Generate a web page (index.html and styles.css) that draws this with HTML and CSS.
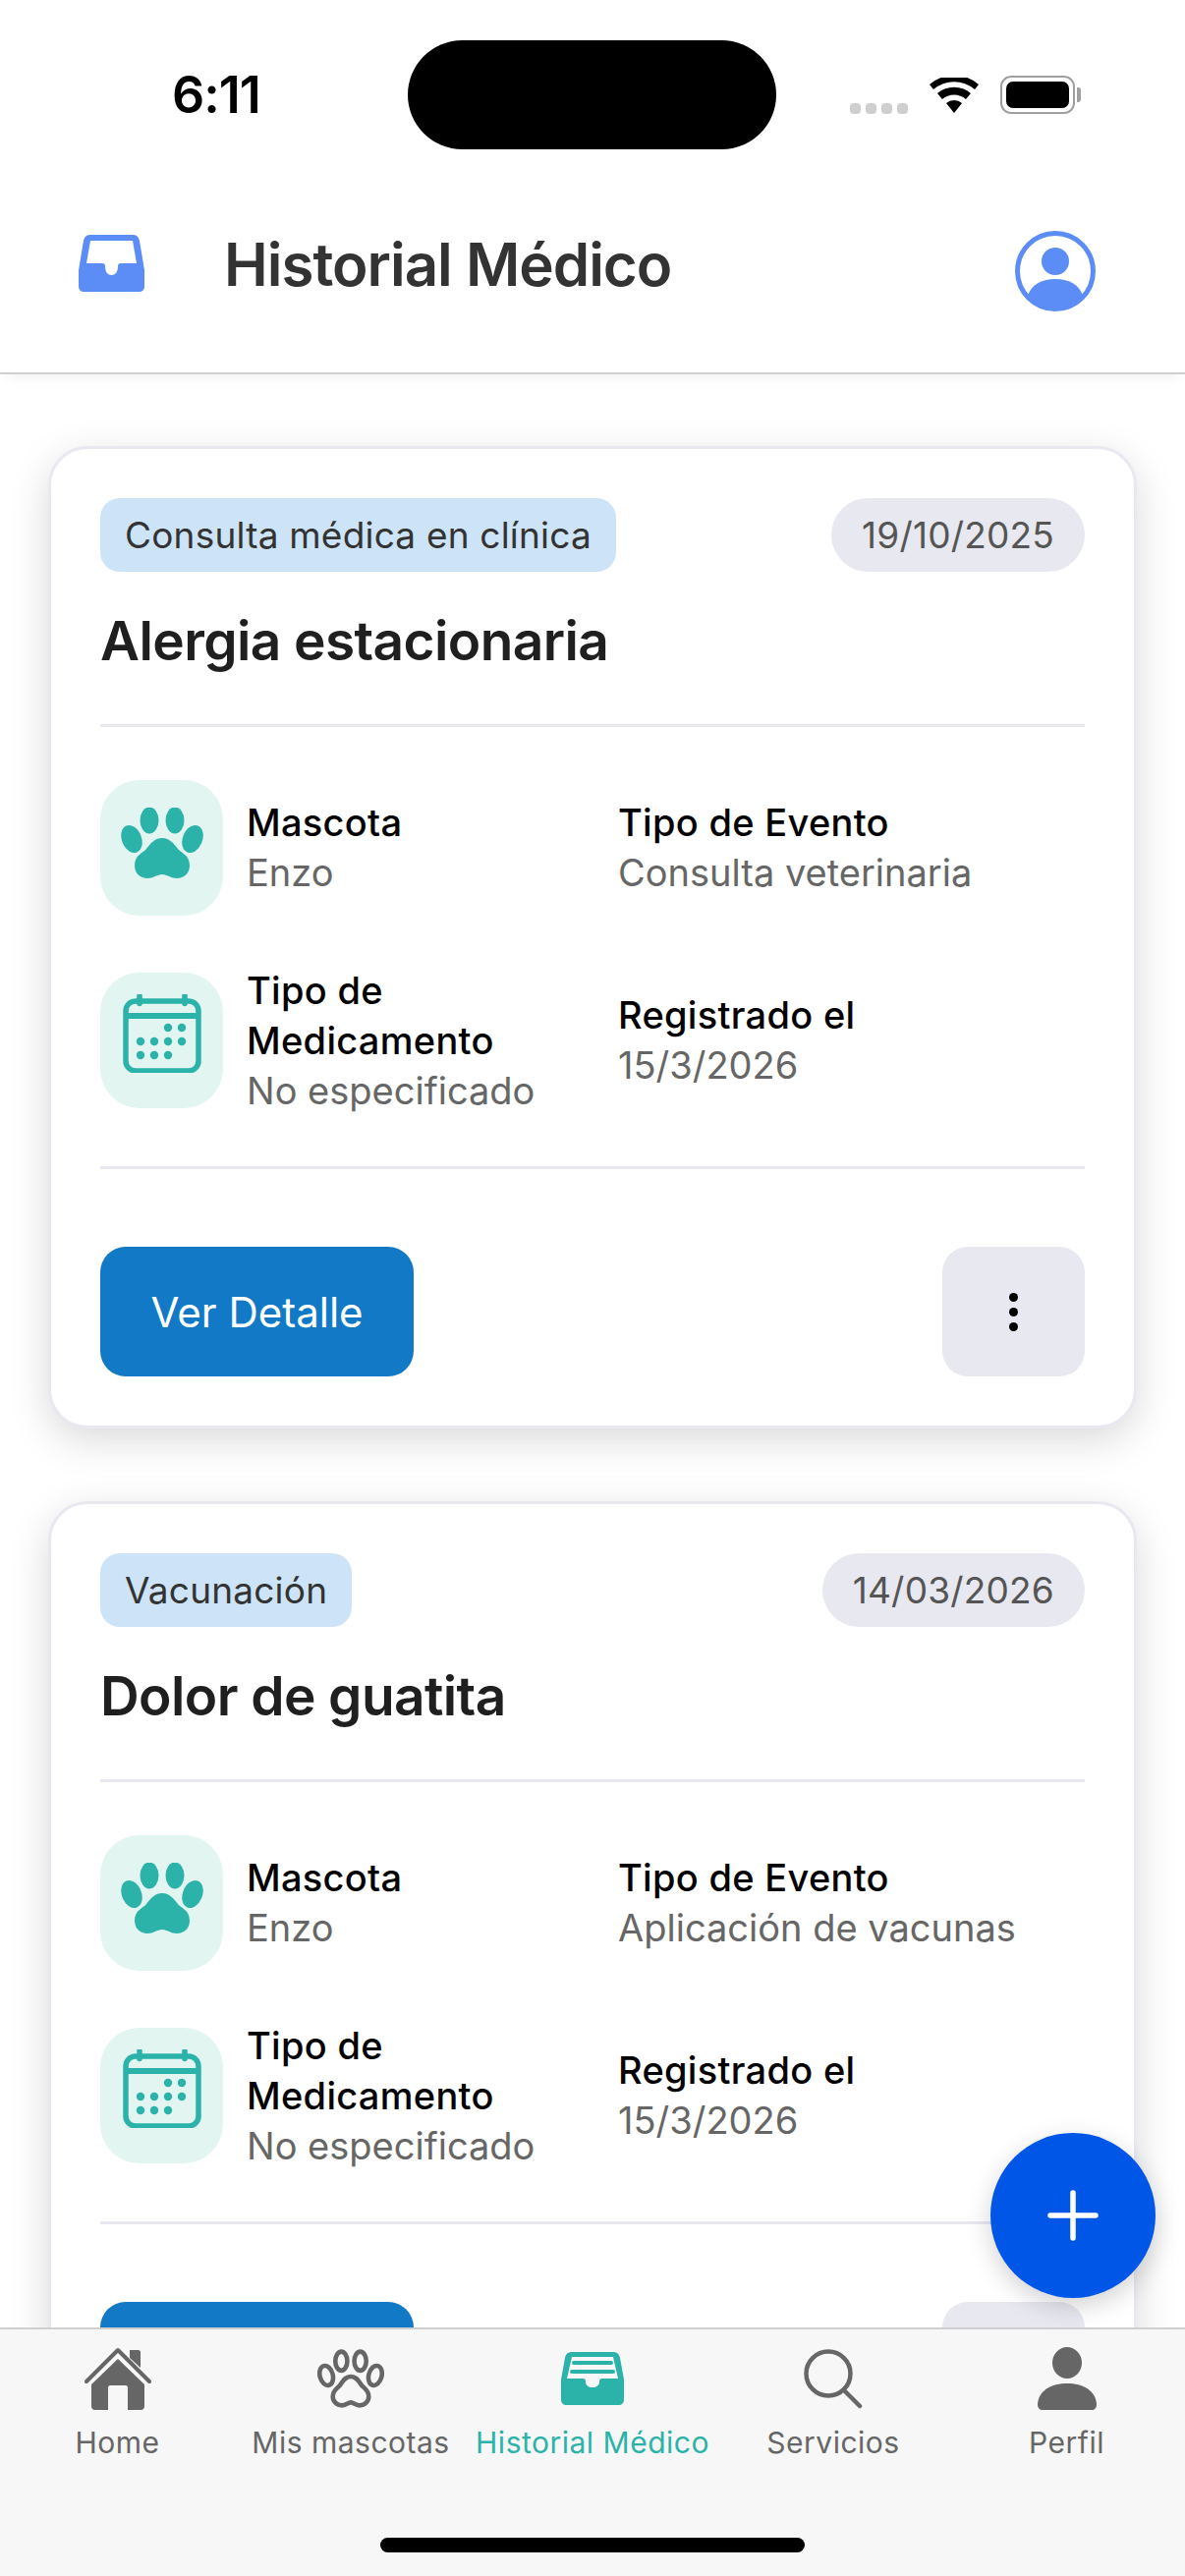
FILE: index.html
```html
<!DOCTYPE html>
<html lang="es">

<head>
    <meta charset="utf-8">
    <meta name="viewport" content="width=device-width, initial-scale=1.0">
    <title>Historial Médico</title>
    <link rel="stylesheet" href="styles.css">
</head>

<body>
    <svg class="defs" width="0" height="0">
        <symbol id="paw" viewBox="0 0 84 72">
            <ellipse cx="29" cy="13" rx="9.5" ry="13.5" />
            <ellipse cx="55" cy="13" rx="9.5" ry="13.5" />
            <ellipse cx="11" cy="32" rx="10" ry="14.5" transform="rotate(-22 11 32)" />
            <ellipse cx="73" cy="32" rx="10" ry="14.5" transform="rotate(22 73 32)" />
            <path d="M42 31c8 0 12 6 16 11 3 4 12 6 12 17 0 8-6 13-13 13-6 0-10-4-15-4s-9 4-15 4c-7 0-13-5-13-13 0-11 9-13 12-17 4-5 8-11 16-11z" />
        </symbol>
        <symbol id="calendario" viewBox="0 0 80 80">
            <rect x="3" y="7" width="74" height="71" rx="10" fill="none" stroke="currentColor" stroke-width="5.5" />
            <path d="M3 22h74" stroke="currentColor" stroke-width="6" />
            <path d="M17 1.500v8M63 1.500v8" stroke="currentColor" stroke-width="5.5" stroke-linecap="round" />
            <g fill="currentColor">
                <circle cx="46" cy="34" r="4.2" />
                <circle cx="60" cy="34" r="4.2" />
                <circle cx="18" cy="48" r="4.2" />
                <circle cx="32" cy="48" r="4.2" />
                <circle cx="46" cy="48" r="4.2" />
                <circle cx="60" cy="48" r="4.2" />
                <circle cx="18" cy="62" r="4.2" />
                <circle cx="32" cy="62" r="4.2" />
                <circle cx="46" cy="62" r="4.2" />
            </g>
        </symbol>
    </svg>

    <main class="telefono">
        <div class="status">
            <span class="hora">6:11</span>
            <div class="isla"></div>
            <div class="status-iconos">
                <div class="senal"><i></i><i></i><i></i><i></i></div>
                <svg class="wifi" viewBox="0 0 50 36">
                    <path d="M25 36 17 26a12 12 0 0 1 16 0zM13 22 8 16a26 26 0 0 1 34 0l-5 6a18 18 0 0 0-24 0zM4 12 0 7a38 38 0 0 1 50 0l-4 5a32 32 0 0 0-42 0z" />
                </svg>
                <div class="bateria"><div class="bateria-nivel"></div></div>
            </div>
        </div>

        <header class="cabecera">
            <svg class="cabecera-icono" viewBox="0 0 67 58">
                <path fill-rule="evenodd" d="M12 0h43c4 0 6 2 7 6l5 30v16c0 4-2 6-6 6H6c-4 0-6-2-6-6V36L5 6c1-4 3-6 7-6zm0 6L8 29h16c2 0 3 1 3 3 0 5 2 9 6.500 9S40 37 40 32c0-2 1-3 3-3h16L55 6z" />
            </svg>
            <h1>Historial Médico</h1>
            <svg class="cabecera-perfil" viewBox="0 0 82 82">
                <circle cx="41" cy="41" r="38.500" fill="none" stroke="currentColor" stroke-width="5" />
                <circle cx="41" cy="31" r="14" />
                <path d="M13 66c4-12 15-17 28-17s24 5 28 17a38 38 0 0 1-56 0z" />
            </svg>
        </header>

        <section class="lista">
            <article class="tarjeta">
                <div class="tarjeta-top">
                    <span class="tag">Consulta médica en clínica</span>
                    <span class="fecha">19/10/2025</span>
                </div>
                <h2>Alergia estacionaria</h2>
                <div class="datos">
                    <div class="dato">
                        <div class="dato-icono"><svg class="ic-paw"><use href="#paw" /></svg></div>
                        <p><b>Mascota</b>Enzo</p>
                    </div>
                    <div class="dato">
                        <p><b>Tipo de Evento</b>Consulta veterinaria</p>
                    </div>
                    <div class="dato">
                        <div class="dato-icono"><svg class="ic-cal"><use href="#calendario" /></svg></div>
                        <p><b>Tipo de Medicamento</b>No especificado</p>
                    </div>
                    <div class="dato">
                        <p><b>Registrado el</b>15/3/2026</p>
                    </div>
                </div>
                <div class="acciones">
                    <button class="ver">Ver Detalle</button>
                    <button class="mas" aria-label="Más"><i></i><i></i><i></i></button>
                </div>
            </article>

            <article class="tarjeta">
                <div class="tarjeta-top">
                    <span class="tag">Vacunación</span>
                    <span class="fecha">14/03/2026</span>
                </div>
                <h2>Dolor de guatita</h2>
                <div class="datos">
                    <div class="dato">
                        <div class="dato-icono"><svg class="ic-paw"><use href="#paw" /></svg></div>
                        <p><b>Mascota</b>Enzo</p>
                    </div>
                    <div class="dato">
                        <p><b>Tipo de Evento</b>Aplicación de vacunas</p>
                    </div>
                    <div class="dato">
                        <div class="dato-icono"><svg class="ic-cal"><use href="#calendario" /></svg></div>
                        <p><b>Tipo de Medicamento</b>No especificado</p>
                    </div>
                    <div class="dato">
                        <p><b>Registrado el</b>15/3/2026</p>
                    </div>
                </div>
                <div class="acciones">
                    <button class="ver">Ver Detalle</button>
                    <button class="mas" aria-label="Más"><i></i><i></i><i></i></button>
                </div>
            </article>
        </section>

        <button class="fab" aria-label="Agregar">
            <svg viewBox="0 0 52 52"><path d="M26 3v46M3 26h46" /></svg>
        </button>

        <nav class="tabs">
            <a class="tab">
                <svg viewBox="0 0 68 64">
                    <path d="M46 3h9c1 0 2 1 2 2v16l-11-10z" />
                    <path d="M34 12 7 38v22c0 2 1 4 4 4h13V41c0-1 1-2 2-2h16c1 0 2 1 2 2v23h13c3 0 4-2 4-4V38z" />
                    <path d="M2 35 34 3l32 32" fill="none" stroke="currentColor" stroke-width="4" stroke-linecap="round" stroke-linejoin="round" />
                </svg>
                <span>Home</span>
            </a>
            <a class="tab">
                <svg viewBox="0 0 67 58" class="pata-linea">
                    <ellipse cx="24" cy="11.500" rx="6" ry="9.500" />
                    <ellipse cx="43" cy="11.500" rx="6" ry="9.500" />
                    <ellipse cx="9" cy="26" rx="6.500" ry="10" transform="rotate(-15 9 26)" />
                    <ellipse cx="58" cy="26" rx="6.500" ry="10" transform="rotate(15 58 26)" />
                    <path d="M33.500 27c6 0 8 5 11 9 3 3 7 5 7 11 0 5-4 9-9 9-4 0-6-3-9-3s-5 3-9 3c-5 0-9-4-9-9 0-6 4-8 7-11 3-4 5-9 11-9z" />
                </svg>
                <span>Mis mascotas</span>
            </a>
            <a class="tab activo">
                <svg viewBox="0 0 64 54">
                    <path fill-rule="evenodd" d="M11 0h42c4 0 6 2 7 6l4 22v20c0 4-2 6-6 6H6c-4 0-6-2-6-6V28L4 6c1-4 3-6 7-6zm0 5L6 27h16c2 0 3 1 3 3 0 4 3 6 7 6s7-2 7-6c0-2 1-3 3-3h16L53 5z" />
                    <path d="M13 11h38M11 20h42" stroke="currentColor" stroke-width="4" stroke-linecap="round" />
                </svg>
                <span>Historial Médico</span>
            </a>
            <a class="tab">
                <svg viewBox="0 0 60 60" class="lupa">
                    <circle cx="25" cy="25" r="22.500" />
                    <path d="M41 42 57 58" stroke-linecap="round" />
                </svg>
                <span>Servicios</span>
            </a>
            <a class="tab">
                <svg viewBox="0 0 60 64">
                    <ellipse cx="30" cy="16" rx="15" ry="16" />
                    <path d="M0 58c1-14 14-21 30-21s29 7 30 21c0 4-2 6-5 6H5c-3 0-5-2-5-6z" />
                </svg>
                <span>Perfil</span>
            </a>
        </nav>
        <div class="home-bar"></div>
    </main>
</body></html>
```

FILE: styles.css
```css
* {
    box-sizing: border-box;
}

html,
body {
    margin: 0;
    padding: 0;
}

body {
    font-family: Inter, "Noto Sans", sans-serif;
    background-color: white;
}

.defs {
    position: absolute;
}

.telefono {
    position: relative;
    width: 1206px;
    height: 2622px;
    overflow: hidden;
    display: flex;
    flex-direction: column;
}

/* status bar */
.status {
    display: flex;
    align-items: center;
    height: 111px;
    margin-top: 41px;
    padding-left: 175px;
    flex-shrink: 0;
}

.hora {
    width: 240px;
    font-size: 52px;
    font-weight: 600;
    color: black;
    letter-spacing: -1px;
}

.isla {
    width: 375px;
    height: 111px;
    border-radius: 56px;
    background-color: black;
}

.status-iconos {
    display: flex;
    align-items: center;
    margin-left: 75px;
}

.senal {
    display: flex;
    gap: 5px;
    margin-top: 28px;
    margin-right: 22px;
}

.senal i {
    width: 11px;
    height: 11px;
    border-radius: 4px;
    background-color: #cfcfcf;
}

.wifi {
    width: 50px;
    height: 36px;
    margin-right: 22px;
}

.bateria {
    position: relative;
    width: 76px;
    height: 39px;
    padding: 4px;
    border: 2px solid #a0a0a0;
    border-radius: 11px;
}

.bateria::after {
    content: "";
    position: absolute;
    right: -8px;
    top: 10px;
    width: 4px;
    height: 15px;
    border-radius: 0 3px 3px 0;
    background-color: #a0a0a0;
}

.bateria-nivel {
    width: 100%;
    height: 100%;
    border-radius: 7px;
    background-color: black;
}

/* header */
.cabecera {
    display: flex;
    align-items: center;
    height: 229px;
    padding: 0 91px 0 80px;
    background-color: white;
    border-bottom: 2px solid #cfcfcf;
    flex-shrink: 0;
    position: relative;
    z-index: 2;
    box-shadow: 0 10px 12px -6px rgba(0, 0, 0, 0.05);
}

.cabecera h1 {
    flex: 1;
    margin: 6px 0 0 81px;
    font-size: 60px;
    font-weight: 600;
    letter-spacing: -1px;
    color: #333333;
}

.cabecera-icono {
    width: 67px;
    height: 58px;
    margin-top: 4px;
    fill: #5c8df6;
}

.cabecera-perfil {
    width: 82px;
    height: 82px;
    margin-top: 20px;
    color: #5c8df6;
    fill: #5c8df6;
}

/* cards */
.lista {
    flex: 1;
    min-height: 0;
    overflow: hidden;
    padding: 73px 49px 0 49px;
    display: flex;
    flex-direction: column;
    gap: 74px;
}

.tarjeta {
    flex-shrink: 0;
    padding: 50px;
    border: 3px solid #e8e8f0;
    border-radius: 40px;
    background-color: white;
    box-shadow: 0 12px 40px rgba(0, 0, 0, 0.15);
}

.tarjeta-top {
    display: flex;
    justify-content: space-between;
}

.tag,
.fecha {
    display: block;
    height: 75px;
    line-height: 75px;
    font-size: 37px;
    letter-spacing: 0.2px;
}

.tag {
    padding: 0 25px;
    border-radius: 20px;
    background-color: #cde4f8;
    color: #333333;
}

.fecha {
    padding: 0 31px;
    border-radius: 38px;
    background-color: #e8e8f0;
    color: #555555;
}

.tarjeta h2 {
    height: 158px;
    margin: 0;
    padding-top: 37px;
    border-bottom: 3px solid #e8e8f0;
    font-size: 55px;
    font-weight: 600;
    letter-spacing: -0.6px;
    color: #1f1f1f;
}

.datos {
    display: grid;
    grid-template-columns: 527px 1fr;
    row-gap: 49px;
    padding: 54px 0 51px;
    border-bottom: 3px solid #e8e8f0;
}

.dato {
    display: flex;
    align-items: center;
    gap: 24px;
}

.dato p {
    margin: 0;
    width: 310px;
    font-size: 38px;
    line-height: 51px;
    color: #666666;
}

.dato:nth-child(even) p {
    width: auto;
}

.dato:nth-child(3) p {
    padding-top: 2px;
}

.dato b {
    display: block;
    font-weight: 500;
    letter-spacing: 0.3px;
    color: black;
}

.dato-icono {
    display: flex;
    align-items: center;
    justify-content: center;
    width: 125px;
    height: 138px;
    flex-shrink: 0;
    border-radius: 40px;
    background-color: #e2f5f1;
}

.ic-paw {
    width: 84px;
    height: 72px;
    margin-bottom: 10px;
    fill: #2bb3aa;
}

.ic-cal {
    width: 80px;
    height: 80px;
    margin-bottom: 14px;
    color: #2bb3aa;
}

.acciones {
    display: flex;
    justify-content: space-between;
    padding-top: 79px;
}

button {
    border: none;
    font-family: inherit;
}

.ver {
    width: 319px;
    height: 132px;
    border-radius: 26px;
    background-color: #1279c6;
    color: white;
    font-size: 42px;
}

.mas {
    display: flex;
    flex-direction: column;
    align-items: center;
    justify-content: center;
    gap: 6px;
    width: 145px;
    height: 132px;
    border-radius: 26px;
    background-color: #e8e8f0;
}

.mas i {
    width: 9px;
    height: 9px;
    border-radius: 50%;
    background-color: black;
}

/* add button */
.fab {
    position: absolute;
    right: 30px;
    bottom: 283px;
    z-index: 3;
    display: flex;
    align-items: center;
    justify-content: center;
    width: 168px;
    height: 168px;
    border-radius: 50%;
    background-color: #0057e7;
    box-shadow: 0 8px 26px rgba(0, 0, 0, 0.18);
}

.fab svg {
    width: 52px;
    height: 52px;
    fill: none;
    stroke: white;
    stroke-width: 5.500;
    stroke-linecap: round;
}

/* tab bar */
.tabs {
    position: relative;
    z-index: 2;
    display: grid;
    grid-template-columns: 239px 236px 256px 234px 241px;
    height: 253px;
    padding-top: 18px;
    flex-shrink: 0;
    border-top: 2px solid #cfcfcf;
    background-color: #f7f7f7;
}

.tab {
    display: flex;
    flex-direction: column;
    align-items: center;
    color: #666666;
    white-space: nowrap;
}

.tab svg {
    width: 68px;
    height: 64px;
    fill: currentColor;
}

.tab span {
    margin-top: 13px;
    font-size: 30px;
    line-height: 40px;
    letter-spacing: 0.5px;
}

.tab .pata-linea,
.tab .lupa {
    fill: none;
    stroke: currentColor;
    stroke-width: 4.500;
}

.tab .lupa {
    width: 60px;
}

.tab.activo {
    color: #2bb3aa;
}

.tab.activo svg {
    width: 64px;
}

.home-bar {
    position: absolute;
    left: 387px;
    bottom: 24px;
    z-index: 3;
    width: 432px;
    height: 15px;
    border-radius: 8px;
    background-color: black;
}
```
